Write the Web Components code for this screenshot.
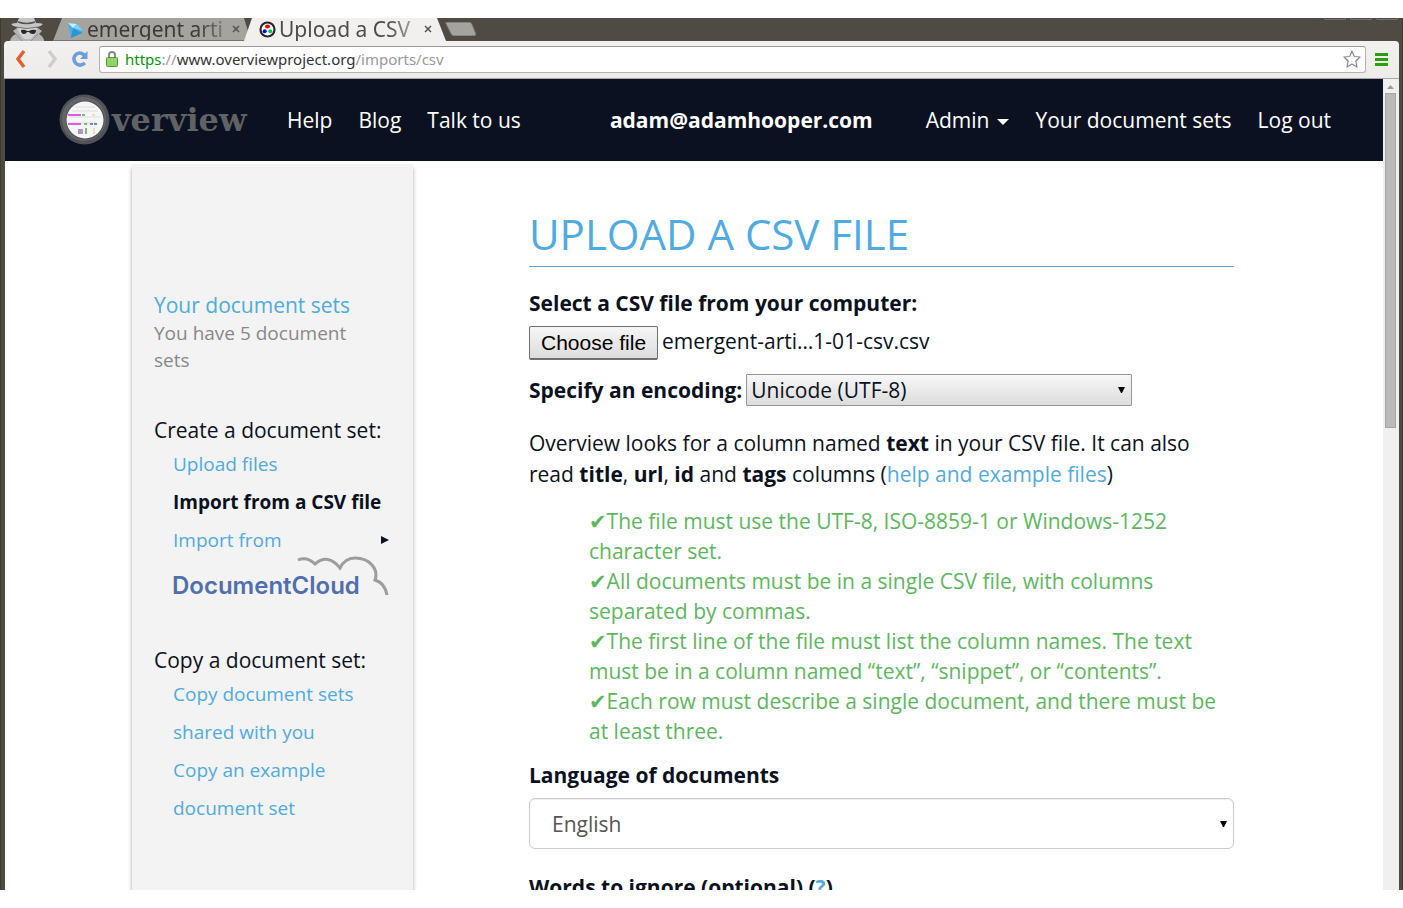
<!DOCTYPE html>
<html lang="en">
<head>
<meta charset="utf-8">
<title>Upload a CSV file</title>
<style>
html,body{margin:0;background:#fff}
body{padding:18px 0;box-sizing:border-box;height:100vh;overflow:hidden;font-family:"Open Sans","Noto Sans",sans-serif;color:#0b1121}
</style>
</head>
<body>
<browser-window>
  <browser-tabs slot="tabs"></browser-tabs>
  <address-bar slot="toolbar"></address-bar>
  <overview-page></overview-page>
</browser-window>
<script>
function define(name, html, setup) {
  const t = document.createElement('template');
  t.innerHTML = html;
  customElements.define(name, class extends HTMLElement {
    constructor() {
      super();
      const root = this.attachShadow({mode: 'open'});
      root.append(t.content.cloneNode(true));
      if (setup) setup(root, this);
    }
  });
}

define('browser-window', `
<style>
:host{display:flex;flex-direction:column;height:100%;overflow:hidden;background:#4f4b43;box-sizing:border-box;
 border-left:1px solid #3c3a34;border-right:1px solid #3c3a34}
.strip{height:23px;flex:none}
.bar{margin:0 3px;flex:none}
.view{display:flex;flex:1;min-height:0;margin:0 3px 0 4px;background:#fff}
.page{flex:1;min-width:0;overflow:hidden}
.scroll{width:16px;flex:none;background:#f0f0f0}
.scroll svg{display:block}
.thumb{width:9px;height:333px;margin-left:2px;background:#bababa;border:1px solid #a6a6a6}
</style>
<div class="strip"><slot name="tabs"></slot></div>
<div class="bar"><slot name="toolbar"></slot></div>
<div class="view"><div class="page"><slot></slot></div>
<div class="scroll"><svg width="15" height="14"><path d="M4 10L7.500 6L11 10z" fill="#9a9a9a"/></svg><div class="thumb"></div></div></div>`);

define('browser-tabs', `
<style>
:host{display:flex;height:23px;font-family:"Noto Sans",sans-serif;font-size:21px}
.spy{width:52px;flex:none}
.tab{display:flex;align-items:center;height:23px;box-sizing:border-box;flex:none;color:#3d3a34}
.back{width:198px;padding:0 10px 0 14px;background:#a5a39e;clip-path:polygon(9px 0,calc(100% - 7px) 0,100% 100%,0 100%);border-bottom:1px solid #77746e}
.front{width:202px;padding:0 13px 0 15px;background:#f1f0ef;color:#4b4b4b;margin-left:-7px;clip-path:polygon(8px 0,calc(100% - 9px) 0,100% 100%,0 100%)}
button{all:unset;cursor:pointer}
.name{flex:1;min-width:0;line-height:22px;white-space:nowrap;margin:0 2px 0 3px;-webkit-mask-image:linear-gradient(90deg,#000 76%,rgba(0,0,0,.25))}
.front .name{line-height:20px;padding-bottom:2px}
.close{display:flex;flex:none}
.new{width:32px;height:14px;margin:4px 0 0 -1px;flex:none}
svg{display:block;flex:none}
.win{margin-left:auto;display:flex;gap:4px;padding-right:4px}
.win i{width:20px;height:1px;border:1px solid #77746c;border-top:0;border-radius:0 0 3px 3px}
</style>
<svg class="spy" width="52" height="23" viewBox="0 0 52 23">
 <path d="M9 23Q10 18 15 16l-3-3l4-3h21l4 3l-3 3q5 3 5 7z" fill="#b4b4b4"/>
 <path d="M16 7h20l-1 8l-5 6h-7l-5-6z" fill="#d2d2d2"/>
 <path d="M18 0h15l2 5q5 0 7 1q-3 4-16 4T10 6q3-1 6-1z" fill="#c6c6c6"/>
 <path d="M17 4q9 3 17 0" fill="none" stroke="#55524b" stroke-width="1.500"/>
 <path d="M15 9q11 3 22 0" fill="none" stroke="#77746e"/>
 <path d="M20 12q4-1 6 1h2q3-2 7-1q0 4-3 4t-4-2h-2q-1 2-3 2q-3 0-3-4z" fill="#292824"/>
 <path d="M15 16l6 7M37 16l-7 7" stroke="#929292"/></svg>
<div class="tab back">
 <svg width="17" height="18" viewBox="0 0 17 18"><path d="M1 3l9 1l6 7l-1 2l-11 5z" fill="#43b1e8"/><path d="M1 3l5 5l4-4z" fill="#c9effc"/><path d="M10 4l6 7l-10-3z" fill="#7fd2f6"/><path d="M6 8l9 5l-11 5z" fill="#2795d6"/></svg>
 <button class="name">emergent arti</button>
 <button class="close" aria-label="Close tab"><svg width="9" height="9"><path d="M1 1l6 6M7 1L1 7" stroke="#55524c" stroke-width="1.500"/></svg></button>
</div>
<div class="tab front">
 <svg width="17" height="17" viewBox="0 0 17 17"><circle cx="8.500" cy="8.500" r="7" fill="#fff" stroke="#292929" stroke-width="2.200"/><ellipse cx="8.500" cy="5.500" rx="2.500" ry="2" fill="#f00"/><circle cx="5.700" cy="10.300" r="2" fill="#00f"/><circle cx="11.300" cy="10.300" r="2" fill="#00c85a"/></svg>
 <button class="name">Upload a CSV</button>
 <button class="close" aria-label="Close tab"><svg width="9" height="9"><path d="M1 1l6 6M7 1L1 7" stroke="#55524c" stroke-width="1.500"/></svg></button>
</div>
<button class="new" aria-label="New tab"><svg width="32" height="14"><path d="M2 0H24Q26 0 27 2L31 12Q31 14 29 14H9Q7 14 6 12L1 2Q0 0 2 0z" fill="#a5a39e" stroke="#6d6a63"/></svg></button>
<div class="win"><i></i><i></i><i></i></div>`);

define('address-bar', `
<style>
:host{display:flex;align-items:center;height:38px;box-sizing:border-box;background:linear-gradient(#f2f1f0,#edecea);border-bottom:1px solid #a9a7a5;border-radius:4px 4px 0 0;padding:0 11px 1px 8px;font-family:"Noto Sans",sans-serif}
button{all:unset;display:flex;cursor:pointer;flex:none}
.nav{display:flex;gap:10px;width:87px;align-items:center}
.field{flex:1;display:flex;align-items:center;height:27px;box-sizing:border-box;background:#fff;border:1px solid #b5b3b1;border-top-color:#999;border-radius:3px;padding:0 4px 0 6px}
.url{flex:1;margin-left:7px;font-size:15px;line-height:22px;color:#999;outline:0;white-space:nowrap}
.url b{font-weight:400;color:#090}.url span{color:#333}
.menu{margin-left:9px}
svg{display:block;flex:none}
</style>
<div class="nav">
 <button aria-label="Back"><svg width="20" height="20"><path d="M12 2L6 10l6 8" fill="none" stroke="#e2622b" stroke-width="3.500"/></svg></button>
 <button aria-label="Forward"><svg width="20" height="20"><path d="M7 2l6 8l-6 8" fill="none" stroke="#d0cecd" stroke-width="3.500"/></svg></button>
 <button aria-label="Reload"><svg width="18" height="18"><path d="M12.500 5Q7 1 3.500 5T4 13.500Q8 17 13 13" fill="none" stroke="#6b9fd8" stroke-width="3.500"/><path d="M15.500 1v8H8z" fill="#6b9fd8"/></svg></button>
</div>
<div class="field">
 <svg width="12" height="16"><path d="M3 8V4q0-3 3-3t3 3v4" fill="none" stroke="#8a8a8a" stroke-width="2"/><rect x=".5" y="6.500" width="11" height="9" rx="1" fill="#8fd468" stroke="#55a02e"/></svg>
 <div class="url" role="textbox" aria-label="Address" contenteditable="true" spellcheck="false"><b>https</b>://<span>www.overviewproject.org</span>/imports/csv</div>
 <button aria-label="Bookmark"><svg width="18" height="18"><path d="M9 1l2.300 5.500l5.800.5l-4.300 4l1.200 6L9 14l-5 3l1.200-6L.9 7l5.800-.5z" fill="#fff" stroke="#888" stroke-width="1.200" stroke-linejoin="round"/></svg></button>
</div>
<button class="menu" aria-label="Menu"><svg width="13" height="13"><path d="M0 1.500h13M0 6.500h13M0 11.500h13" stroke="#2f9e0b" stroke-width="3"/></svg></button>`);

define('overview-page', `
<style>
:host{display:block}
.cols{display:flex;max-width:1124px;margin:3px auto 0}
</style>
<site-nav></site-nav>
<div class="cols"><side-menu></side-menu><upload-form></upload-form></div>`);

define('site-nav', `
<style>
:host{display:flex;align-items:center;height:82px;background:#0b1121;color:#fff;font-size:21px;line-height:30px;padding:0 52px 0 53px}
a{color:inherit;text-decoration:none}
.logo{display:flex;align-items:center;width:229px;color:#606265;font:bold 32px/40px "DejaVu Serif",serif}
.logo svg{display:block;flex:none}
.group{display:flex;gap:26px;align-items:center}
.mail{margin:0 53px 0 auto;font-weight:700}
.caret{display:inline-block;border:6px solid transparent;border-top-color:#fff;border-bottom:0;margin-left:8px;vertical-align:3px}
</style>
<a class="logo" href="#"><svg width="54" height="54" viewBox="0 0 54 54"><circle cx="26.500" cy="26.500" r="25" fill="#505255"/><circle cx="26" cy="26" r="22" fill="#646568"/><circle cx="27" cy="27" r="19.500" fill="#4f5153"/><circle cx="27" cy="27" r="18.500" fill="#f6f6f6"/>
<path d="M17 14h20M14 18h26M11 24h32M11 30h28" stroke="#ddd"/><path d="M10 22h13M10 31h13" stroke="#e05be3" stroke-width="2"/><path d="M20 36h5v5h-5z" fill="#b98fbb"/><path d="M24 22h3M28 35v6M26 31h3" stroke="#69c575" stroke-width="2"/><path d="M32 31h3M36 31h3" stroke="#648bd0" stroke-width="2"/><path d="M34 22h3M36 35v6" stroke="#d9cf84"/></svg><span>verview</span></a>
<nav class="group"><a href="#">Help</a><a href="#">Blog</a><a href="#">Talk to us</a></nav>
<a class="mail" href="#">adam@adamhooper.com</a>
<nav class="group"><a href="#">Admin<span class="caret"></span></a><a href="#">Your document sets</a><a href="#">Log out</a></nav>`);

define('side-menu', `
<style>
:host{display:block;flex:none;width:281px;box-sizing:border-box;min-height:760px;background:#f3f3f3;box-shadow:0 4px 4px rgba(0,0,0,.35);padding:126px 20px 0 22px;font-size:19px}
a{color:#4fabe1;text-decoration:none}
h3,p,ul{margin:0;padding:0;list-style:none}
h3{font-size:21px;line-height:30px;font-weight:400}
p{line-height:27px;color:#888;max-width:220px}
ul{padding-left:19px}
li{line-height:38px;max-width:217px}
.intro{margin-bottom:41px}
b{color:#0b1121}
.row{display:flex;justify-content:space-between;align-items:center}
.dc{display:block;position:relative;font:600 24px/38px Inter,sans-serif;color:#4f6fb0;margin:8px 0 40px -1px}
.dc svg{position:absolute;left:125px;top:-11px}
.copy li{max-width:190px}
</style>
<div class="intro"><h3><a href="#">Your document sets</a></h3><p>You have 5 document sets</p></div>
<h3>Create a document set:</h3>
<ul><li><a href="#">Upload files</a></li><li><b>Import from a CSV file</b></li>
<li><a href="#"><span class="row">Import from<svg width="10" height="10"><path d="M1 1l8 4l-8 4z" fill="#0b1121"/></svg></span>
<span class="dc">DocumentCloud<svg width="94" height="42" viewBox="0 0 94 42"><path d="M1 4Q10 0 18 8Q31-3 43 12Q48 2 58 2Q69 2 75 9T78 24Q88 27 90 39" fill="none" stroke="#9c9d9e" stroke-width="3"/></svg></span></a></li></ul>
<h3>Copy a document set:</h3>
<ul class="copy"><li><a href="#">Copy document sets shared with you</a></li><li><a href="#">Copy an example document set</a></li></ul>`);

define('arrow-select', `
<style>
:host{display:grid;align-items:center}
select{grid-area:1/1;appearance:none;font:21px/30px "Open Sans",sans-serif;box-sizing:border-box;width:100%;margin:0;outline:0}
svg{grid-area:1/1;justify-self:end;margin-right:7px;pointer-events:none}
:host([plain]) select{height:32px;padding:0 4px;border:1px solid #979797;border-radius:1px;background:linear-gradient(#f7f7f7,#dcdcdc);color:#0b1121}
:host([wide]) select{height:51px;padding:0 22px;border:1px solid #ccc;border-radius:6px;background:#fff;color:#555;box-shadow:inset 0 1px 1px rgba(0,0,0,.07)}
</style>
<select></select><svg width="7" height="6"><path d="M0 0h7L4 6H3z" fill="#000"/></svg>`, (root, host) => {
  const s = root.querySelector('select');
  s.setAttribute('aria-label', host.getAttribute('label'));
  s.add(new Option(host.getAttribute('value')));
});

define('file-picker', `
<style>
:host{display:flex;align-items:flex-start;gap:4px;height:34px;font-size:21px;line-height:31px}
button{font:21px/24px "Liberation Sans",Arial,sans-serif;height:34px;padding:0 11px;border:1px solid #6f6f6f;border-bottom-width:2px;border-radius:2px;background:linear-gradient(#f6f6f6,#dcdcdc);color:#000;flex:none}
</style>
<input type="file" accept=".csv" hidden aria-label="CSV file"><button type="button">Choose file</button><output>emergent-arti…1-01-csv.csv</output>`, root => {
  const input = root.querySelector('input');
  root.querySelector('button').onclick = () => input.click();
  input.onchange = () => { if (input.files[0]) root.querySelector('output').textContent = input.files[0].name; };
});

define('upload-form', `
<style>
:host{display:block;flex:1;min-width:0;padding:41px 22px 0 116px;font-size:21px;line-height:31px}
h1{margin:0 0 21px;padding-bottom:4px;font-size:42px;line-height:57px;font-weight:400;color:#4fabe1;border-bottom:1px solid #4fabe1;white-space:nowrap}
a{color:#4fabe1;text-decoration:none}
.label{display:block;font-weight:700}
file-picker{margin-top:7px}
.enc{display:flex;align-items:center;gap:4px;margin-top:14px;height:32px}
.enc arrow-select{width:386px}
p{margin:22px 0 0}
ul{list-style:none;margin:16px 0 14px;padding:0 0 0 60px;line-height:30px;color:#5cb85c}
li::before{content:"✔";font-family:"DejaVu Sans",sans-serif;line-height:20px}
arrow-select[wide]{margin:7px 0 23px}
</style>
<h1>UPLOAD A CSV FILE</h1>
<span class="label">Select a CSV file from your computer:</span>
<file-picker></file-picker>
<div class="enc"><span class="label">Specify an encoding:</span><arrow-select plain label="Specify an encoding" value="Unicode (UTF-8)"></arrow-select></div>
<p>Overview looks for a column named <b>text</b> in your CSV file. It can also read <b>title</b>, <b>url</b>, <b>id</b> and <b>tags</b> columns (<a href="#">help and example files</a>)</p>
<ul><li>The file must use the UTF-8, ISO-8859-1 or Windows-1252 character set.</li><li>All documents must be in a single CSV file, with columns separated by commas.</li><li>The first line of the file must list the column names. The text must be in a column named “text”, “snippet”, or “contents”.</li><li>Each row must describe a single document, and there must be at least three.</li></ul>
<span class="label">Language of documents</span>
<arrow-select wide label="Language of documents" value="English"></arrow-select>
<span class="label">Words to ignore (optional) (<a href="#">?</a>)</span>`);
</script>
</body>
</html>
